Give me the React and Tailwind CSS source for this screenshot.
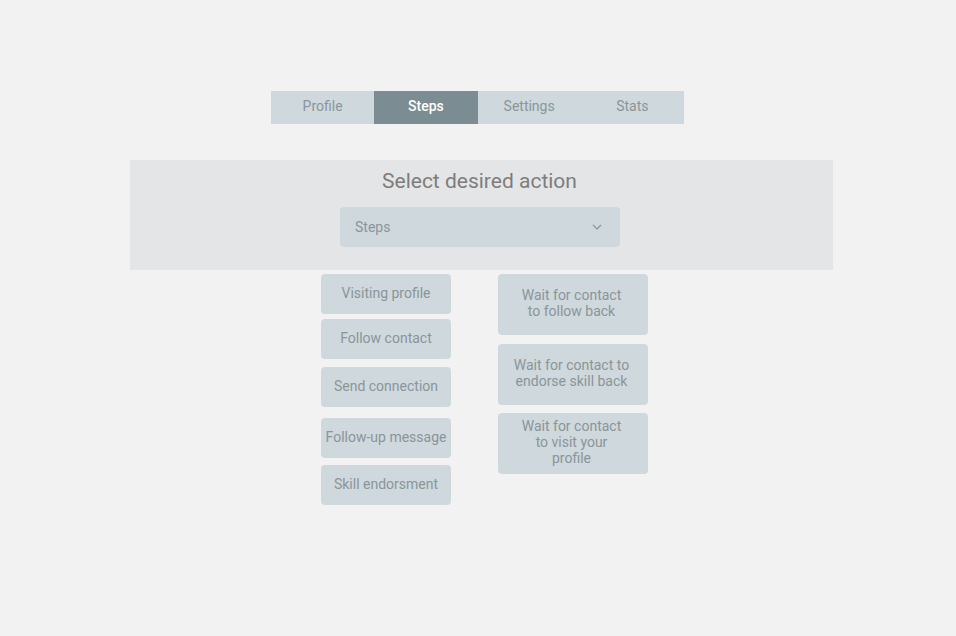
import React, { useState } from 'react';

const tabs = ['Profile', 'Steps', 'Settings', 'Stats'];

const leftSteps = [
  { label: 'Visiting profile', mt: 'mt-0' },
  { label: 'Follow contact', mt: 'mt-[5px]' },
  { label: 'Send connection', mt: 'mt-[8px]' },
  { label: 'Follow-up message', mt: 'mt-[11px]' },
  { label: 'Skill endorsment', mt: 'mt-[7px]' },
];

const rightSteps = [
  { lines: ['Wait for contact', 'to follow back'], mt: 'mt-0' },
  { lines: ['Wait for contact to', 'endorse skill back'], mt: 'mt-[9px]' },
  { lines: ['Wait for contact', 'to visit your', 'profile'], mt: 'mt-[8px]' },
];

export default function App() {
  const [active, setActive] = useState('Steps');

  return (
    <div
      className="min-h-[636px] bg-[#f2f2f2] pt-[91px]"
      style={{ fontFamily: 'Roboto, "Noto Sans", sans-serif' }}
    >
      {/* tabs */}
      <div className="flex justify-center pr-[1px]">
        <div className="flex w-[413px] bg-[#cfd8dc]">
          {tabs.map((tab) => (
            <button
              key={tab}
              onClick={() => setActive(tab)}
              className={
                tab === active
                  ? 'h-[33px] flex-1 bg-[#7b8c93] pb-[2px] text-[14px] font-medium text-white'
                  : 'h-[33px] flex-1 pb-[2px] text-[14px] text-[#8a959a]'
              }
            >
              {tab}
            </button>
          ))}
        </div>
      </div>

      {/* action picker */}
      <div className="ml-[130px] mt-[36px] flex h-[110px] w-[703px] flex-col items-center bg-[#e4e5e6] pt-[7px]">
        <h2 className="pr-[4px] text-[21px] leading-[28px] text-[#7d7d7d]">Select desired action</h2>
        <div className="mt-[12px] ml-[-3px] flex h-[40px] w-[280px] items-center justify-between rounded-[4px] bg-[#cfd8dc] pl-[15px] pr-[18px]">
          <span className="text-[14px] text-[#8a959a]">Steps</span>
          <svg width="10" height="6" viewBox="0 0 10 6" fill="none">
            <path d="M1 1l4 4 4-4" stroke="#8a959a" strokeWidth="1.2" />
          </svg>
        </div>
      </div>

      {/* steps */}
      <div className="mt-[4px] flex justify-center gap-[47px] pl-[13px]">
        <div className="flex w-[130px] flex-col">
          {leftSteps.map((s) => (
            <div
              key={s.label}
              className={`${s.mt} flex h-[40px] items-center justify-center rounded-[4px] bg-[#cfd8dc] pb-[2px] text-[14px] text-[#8a959a]`}
            >
              {s.label}
            </div>
          ))}
        </div>
        <div className="flex w-[150px] flex-col">
          {rightSteps.map((s) => (
            <div
              key={s.lines[0] + s.lines[1]}
              className={`${s.mt} flex h-[61px] flex-col items-center justify-center rounded-[4px] bg-[#cfd8dc] pb-[4px] pr-[3px] text-center text-[14px] leading-[16px] text-[#8a959a]`}
            >
              {s.lines.map((l) => (
                <span key={l}>{l}</span>
              ))}
            </div>
          ))}
        </div>
      </div>
    </div>
  );
}
